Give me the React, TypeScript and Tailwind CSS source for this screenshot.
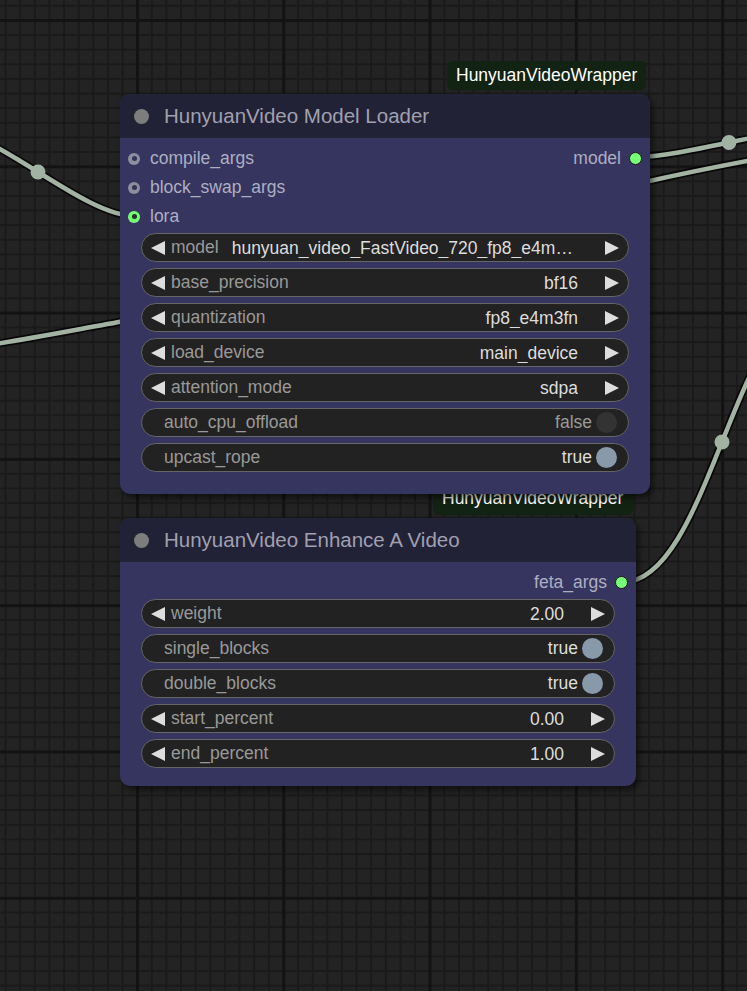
import React from 'react'

type ComboRow = { kind: 'combo'; label: string; value: string }
type ToggleRow = { kind: 'toggle'; label: string; value: boolean }
type Row = ComboRow | ToggleRow

type Slot = { name: string; linked?: boolean }

type NodeProps = {
  title: string
  left: number
  top: number
  width: number
  height: number
  inputs: Slot[]
  outputs: Slot[]
  rows: Row[]
}

const font = "font-['Liberation_Sans',Arial,sans-serif]"

function LeftArrow() {
  return (
    <svg width="14" height="14" viewBox="0 0 14 14" className="shrink-0">
      <polygon points="0,7 14,0 14,14" fill="#dddddd" />
    </svg>
  )
}

function RightArrow() {
  return (
    <svg width="14" height="14" viewBox="0 0 14 14" className="shrink-0">
      <polygon points="14,7 0,0 0,14" fill="#dddddd" />
    </svg>
  )
}

function Widget({ row }: { row: Row }) {
  if (row.kind === 'toggle') {
    return (
      <div className="mx-[21px] h-[29px] shrink-0 rounded-full border border-[#666] bg-[#222] flex items-center pl-[22px] pr-[11px] text-[17.5px] leading-none">
        <span className="text-[#999]">{row.label}</span>
        <span className={`ml-auto ${row.value ? 'text-[#ddd]' : 'text-[#999]'}`}>
          {row.value ? 'true' : 'false'}
        </span>
        <span
          className={`ml-[4px] w-[21px] h-[21px] rounded-full ${row.value ? 'bg-[#8899aa]' : 'bg-[#333]'}`}
        />
      </div>
    )
  }
  return (
    <div className="mx-[21px] h-[29px] shrink-0 rounded-full border border-[#666] bg-[#222] flex items-center pl-[9px] pr-[9px] text-[17.5px] leading-none">
      <LeftArrow />
      <span className="ml-[6px] text-[#999] shrink-0">{row.label}</span>
      <span className="ml-[13px] flex-1 min-w-0 truncate text-right text-[#ddd] leading-[20px]">
        {row.value}
      </span>
      <span className="ml-[27px]">
        <RightArrow />
      </span>
    </div>
  )
}

function InputDot({ linked }: { linked?: boolean }) {
  return (
    <span
      className={`w-[12px] h-[12px] rounded-full flex items-center justify-center shrink-0 ${
        linked ? 'bg-[#77ff77]' : 'bg-[#8e8e9e]'
      }`}
    >
      <span className={`w-[5px] h-[5px] rounded-full ${linked ? 'bg-[#223322]' : 'bg-[#333355]'}`} />
    </span>
  )
}

function GraphNode({ title, left, top, width, height, inputs, outputs, rows }: NodeProps) {
  const slotCount = Math.max(inputs.length, outputs.length)
  return (
    <div
      className="absolute rounded-[10px] bg-[#353560] shadow-[3px_4px_6px_rgba(0,0,0,0.55)] flex flex-col overflow-hidden"
      style={{ left, top, width, height }}
    >
      {/* title bar */}
      <div className="h-[44px] shrink-0 bg-[#222236] flex items-center pl-[14px]">
        <span className="w-[15px] h-[15px] rounded-full bg-[#7d7d7d]" />
        <span className="ml-[15px] text-[20.5px] text-[#a0a0b0] leading-none">{title}</span>
      </div>

      {/* slots */}
      <div className="pt-[6px] flex flex-col">
        {Array.from({ length: slotCount }).map((_, i) => (
          <div key={i} className="h-[29px] flex items-center text-[17.5px] leading-none text-[#aeaec0]">
            {inputs[i] && (
              <div className="flex items-center pl-[8px]">
                <InputDot linked={inputs[i].linked} />
                <span className="ml-[10px]">{inputs[i].name}</span>
              </div>
            )}
            {outputs[i] && (
              <div className="ml-auto flex items-center pr-[8px]">
                <span className="mr-[8px]">{outputs[i].name}</span>
                <span className="w-[13px] h-[13px] rounded-full bg-[#77ff77] border-[1.5px] border-[#1a1a1a]" />
              </div>
            )}
          </div>
        ))}
      </div>

      {/* widgets */}
      <div className="mt-[2px] flex flex-col gap-[6px]">
        {rows.map((r) => (
          <Widget key={r.label} row={r} />
        ))}
      </div>
    </div>
  )
}

function Badge({ left, top, width, height }: { left: number; top: number; width: number; height: number }) {
  return (
    <div
      className="absolute rounded-[6px] bg-[#132313] text-white text-[17.5px] leading-none flex items-center pl-[9px]"
      style={{ left, top, width, height }}
    >
      HunyuanVideoWrapper
    </div>
  )
}

function Link({ d, mid }: { d: string; mid?: [number, number] }) {
  return (
    <g>
      <path d={d} fill="none" stroke="rgba(0,0,0,0.75)" strokeWidth={8} strokeLinecap="round" />
      <path d={d} fill="none" stroke="#a3b3a3" strokeWidth={4.5} strokeLinecap="round" />
      {mid && <circle cx={mid[0]} cy={mid[1]} r={7.5} fill="#a3b3a3" />}
    </g>
  )
}

const loaderRows: Row[] = [
  { kind: 'combo', label: 'model', value: 'hunyuan_video_FastVideo_720_fp8_e4m3fn.safetensors' },
  { kind: 'combo', label: 'base_precision', value: 'bf16' },
  { kind: 'combo', label: 'quantization', value: 'fp8_e4m3fn' },
  { kind: 'combo', label: 'load_device', value: 'main_device' },
  { kind: 'combo', label: 'attention_mode', value: 'sdpa' },
  { kind: 'toggle', label: 'auto_cpu_offload', value: false },
  { kind: 'toggle', label: 'upcast_rope', value: true },
]

const enhanceRows: Row[] = [
  { kind: 'combo', label: 'weight', value: '2.00' },
  { kind: 'toggle', label: 'single_blocks', value: true },
  { kind: 'toggle', label: 'double_blocks', value: true },
  { kind: 'combo', label: 'start_percent', value: '0.00' },
  { kind: 'combo', label: 'end_percent', value: '1.00' },
]

export default function App() {
  return (
    <div
      className={`relative w-[747px] h-[991px] overflow-hidden bg-[#232323] ${font} [background-image:linear-gradient(to_right,#131313_2.5px,transparent_2.5px),linear-gradient(to_bottom,#131313_2.5px,transparent_2.5px),linear-gradient(to_right,#1a1a1a_1.5px,transparent_1.5px),linear-gradient(to_bottom,#1a1a1a_1.5px,transparent_1.5px)] [background-size:146.3px_146.3px,146.3px_146.3px,14.63px_14.63px,14.63px_14.63px] [background-position:136px_19px,136px_19px,4.6px_4.8px,4.6px_4.8px]`}
    >
      {/* links */}
      <svg className="absolute inset-0" width="747" height="991">
        <Link d="M -59 128 C -6 128, 82 216, 135 216" mid={[38, 172]} />
        <Link d="M -5 344 C 40 337, 90 327, 125 321" />
        <Link d="M 645 182 C 680 174, 720 166, 752 160" />
        <Link d="M 636 157 C 683 157, 775 128, 822 128" mid={[729, 142.5]} />
        <Link d="M 623 582 C 709 582, 735 302, 821 302" mid={[722, 442]} />
      </svg>

      <Badge left={447} top={61} width={199} height={29} />
      <Badge left={433} top={483} width={200} height={32} />

      <GraphNode
        title="HunyuanVideo Model Loader"
        left={120}
        top={94}
        width={530}
        height={400}
        inputs={[{ name: 'compile_args' }, { name: 'block_swap_args' }, { name: 'lora', linked: true }]}
        outputs={[{ name: 'model' }]}
        rows={loaderRows}
      />

      <GraphNode
        title="HunyuanVideo Enhance A Video"
        left={120}
        top={518}
        width={516}
        height={268}
        inputs={[]}
        outputs={[{ name: 'feta_args' }]}
        rows={enhanceRows}
      />
    </div>
  )
}
